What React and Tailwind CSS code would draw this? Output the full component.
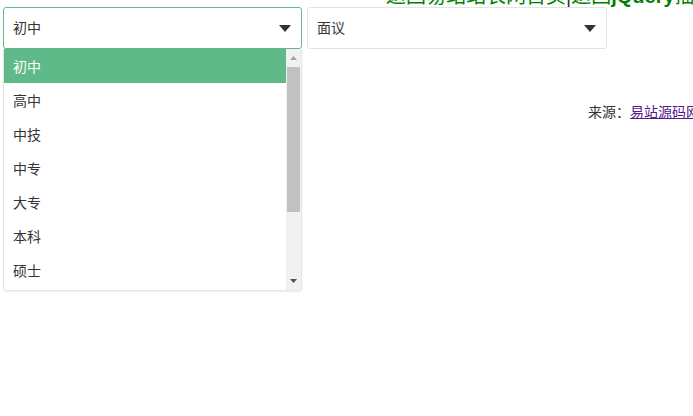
import React from "react";

const levels = ["初中", "高中", "中技", "中专", "大专", "本科", "硕士"];

const Caret = () => (
  <svg width="12" height="7" viewBox="0 0 12 7" className="shrink-0">
    <path d="M0 0 L12 0 L6 7 Z" fill="#333" />
  </svg>
);

const SelectBox = ({ value, active, width }) => (
  <div
    className={`flex items-center justify-between h-[42px] pl-[9px] pr-[10px] bg-white rounded-[3px] border ${
      active ? "border-[#5fb988]" : "border-[#e3e3e3]"
    } ${width}`}
  >
    <span className="text-[14px] text-[#333] pt-[1px]">{value}</span>
    <Caret />
  </div>
);

export default function App() {
  return (
    <div
      className="relative w-[693px] h-[416px] overflow-hidden bg-white"
      style={{ fontFamily: '"Liberation Sans", "Noto Sans CJK SC", sans-serif' }}
    >
      {/* 顶部返回链接，大半在窗口外 */}
      <div className="absolute top-[-15px] left-[386px] whitespace-nowrap text-[20px] leading-[22px] text-[#008000] font-normal">
        返回易站站长网首页<span className="text-[#333]">|</span>返回<b>jQuery</b>插件库
      </div>

      <div className="flex gap-[5px] pt-[7px] pl-[3px]">
        <SelectBox value="初中" active width="w-[299px]" />
        <SelectBox value="面议" width="w-[300px]" />
      </div>

      <div className="mt-[53px] pl-[588px] whitespace-nowrap text-[14px] leading-[20px] text-[#333]">
        来源：<span className="text-[#551a8b] underline">易站源码网</span>
      </div>

      {/* 下拉列表 */}
      <div className="absolute top-[49px] left-[3px] w-[299px] h-[242px] flex bg-white border border-[#e6e6e6] border-t-0 rounded-b-[3px] shadow-[0_1px_2px_rgba(0,0,0,0.08)] overflow-hidden">
        <ul className="flex-1 flex flex-col">
          {levels.map((l, i) => (
            <li
              key={l}
              className={`h-[34px] shrink-0 flex items-center pl-[9px] pt-[2px] text-[14px] ${
                i === 0 ? "bg-[#5fb988] text-white" : "text-[#333]"
              }`}
            >
              {l}
            </li>
          ))}
        </ul>
        <div className="w-[15px] flex flex-col items-center bg-[#f1f1f1]">
          <svg width="7" height="4" viewBox="0 0 7 4" className="mt-[7px] mb-[7px]">
            <path d="M0 4 L7 4 L3.5 0 Z" fill="#a3a3a3" />
          </svg>
          <div className="w-[13px] h-[145px] bg-[#c1c1c1]" />
          <div className="flex-1" />
          <svg width="7" height="4" viewBox="0 0 7 4" className="mb-[7px]">
            <path d="M0 0 L7 0 L3.5 4 Z" fill="#505050" />
          </svg>
        </div>
      </div>
    </div>
  );
}
